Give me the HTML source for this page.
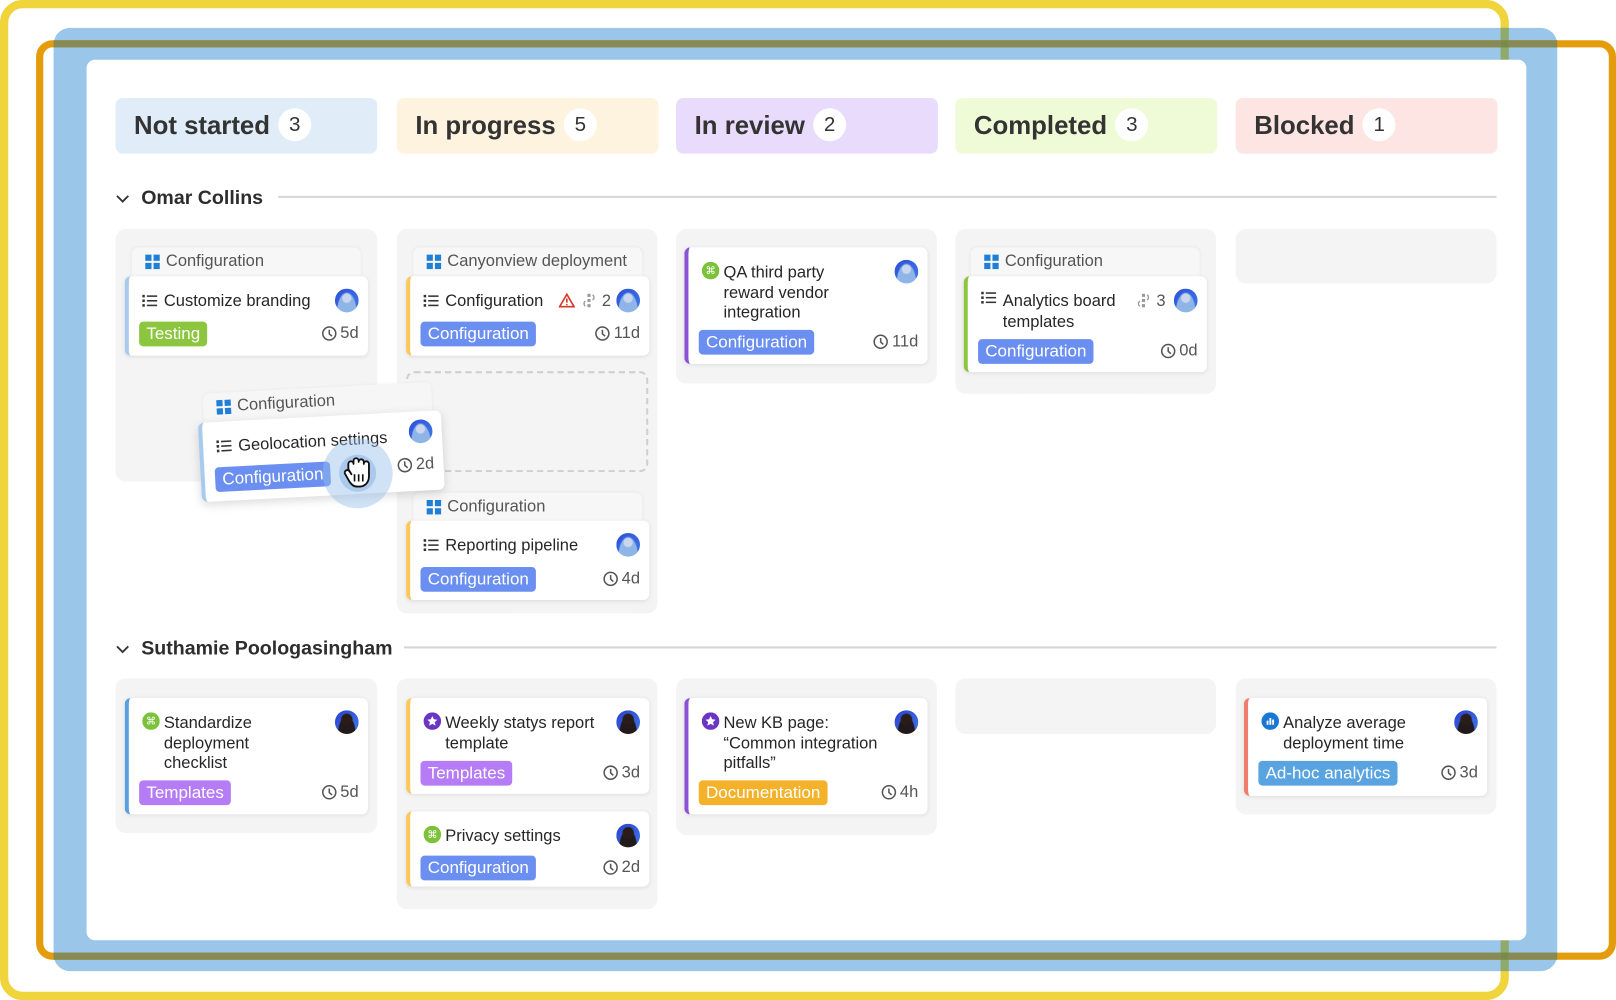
<!DOCTYPE html>
<html><head><meta charset="utf-8"><style>
*{box-sizing:border-box;margin:0;padding:0}
html,body{width:1616px;height:1000px;overflow:hidden;background:#fff}
#s{position:absolute;left:0;top:0;width:1568px;height:970px;transform-origin:0 0;transform:scale(1.030612,1.030928);font-family:"Liberation Sans",sans-serif;color:#2a2a2a}
.a{position:absolute}
.hd{position:absolute;top:95px;height:54px;width:254px;border-radius:7px;font-size:25px;font-weight:bold;color:#333;padding-left:18px;line-height:55px}
.hd span{display:inline-block;width:32px;height:32px;border-radius:50%;background:#fff;text-align:center;line-height:32px;font-weight:normal;font-size:20px;margin-left:8px;vertical-align:3px}
.lane{position:absolute;background:#f4f4f4;border-radius:10px}
.tab{position:absolute;height:29px;width:222px;background:#f7f7f7;border-radius:6px 6px 0 0;box-shadow:0 0 3px rgba(0,0,0,.06);font-size:16px;color:#555;line-height:27px;padding-left:33px}
.tab i{position:absolute;left:13px;top:7px;width:14px;height:14px;background:
linear-gradient(#1f7fd6,#1f7fd6) 0 0/6px 6px no-repeat,linear-gradient(#1f7fd6,#1f7fd6) 8px 0/6px 6px no-repeat,linear-gradient(#1f7fd6,#1f7fd6) 0 8px/6px 6px no-repeat,linear-gradient(#1f7fd6,#1f7fd6) 8px 8px/6px 6px no-repeat}
.card{position:absolute;width:236px;background:#fff;border-radius:6px;box-shadow:0 1px 4px rgba(0,0,0,.09);border-left:4px solid var(--c)}
.t{position:absolute;left:34px;top:15px;font-size:16px;line-height:19.5px;color:#262626;width:160px}
.ic{position:absolute;left:13px;top:16px}
.av{position:absolute;right:9px;top:12px;width:23px;height:23px;border-radius:50%;background:radial-gradient(circle at 50% 40%,#c9d6ee 0 4px,transparent 5px),radial-gradient(ellipse at 50% 100%,#8fb4e8 0 9px,transparent 10px),linear-gradient(135deg,#2f4fd8,#3f7ae8);}
.av.w{background:radial-gradient(circle at 50% 38%,#2a1c18 0 5px,transparent 6px),radial-gradient(ellipse at 50% 100%,#221a1a 0 8px,transparent 9px),linear-gradient(135deg,#2a3fd0,#3f7ae8)}
.tag{position:absolute;left:10px;height:24px;border-radius:4px;color:#fff;font-size:16.5px;line-height:24px;padding:0 7px;margin-top:2px}
.tm{position:absolute;right:9px;font-size:16px;color:#555;line-height:24px;margin-top:2px}
.tm svg{vertical-align:-3px;margin-right:3px}
.cf{background:#6b8ef1}
.sec{position:absolute;font-size:19px;font-weight:bold;color:#2d2d2d}
</style></head><body><div id="s">
<div class="a" style="left:0;top:0;width:1464px;height:970px;border:8px solid #f0d43b;border-radius:22px"></div>
<div class="a" style="left:52px;top:27px;width:1459px;height:915px;background:#99c6e9;border-radius:16px"></div>
<div class="a" style="left:35px;top:39px;width:1533px;height:892px;border:7px solid #e59c0a;border-radius:16px"></div>
<div class="a" style="left:52px;top:39px;width:1459px;height:7px;background:#878a55"></div>
<div class="a" style="left:52px;top:924px;width:1459px;height:7px;background:#878a55"></div>
<div class="a" style="left:1456px;top:27px;width:8px;height:915px;background:#8faa6a"></div>
<div class="a" style="left:1456px;top:39px;width:8px;height:7px;background:#7a8a4a"></div>
<div class="a" style="left:1456px;top:924px;width:8px;height:7px;background:#7a8a4a"></div>
<div class="a" style="left:84px;top:58px;width:1397px;height:854px;background:#fff;border-radius:8px"></div>

<div class="hd" style="left:112px;background:#e0edf9">Not started<span>3</span></div>
<div class="hd" style="left:385px;background:#fdf3df">In progress<span>5</span></div>
<div class="hd" style="left:656px;background:#e9dbfc">In review<span>2</span></div>
<div class="hd" style="left:927px;background:#effbd6">Completed<span>3</span></div>
<div class="hd" style="left:1199px;background:#fde5e4">Blocked<span>1</span></div>

<svg class="a" style="left:112px;top:188px" width="14" height="10"><path d="M1.5 2l5.5 5.5 5.5-5.5" stroke="#333" stroke-width="1.8" fill="none"/></svg>
<div class="sec" style="left:137px;top:182px">Omar Collins</div>
<div class="a" style="left:270px;top:190px;width:1182px;height:2px;background:#d6d6d6"></div>

<div class="lane" style="left:112px;top:222px;width:254px;height:245px"></div>
<div class="lane" style="left:385px;top:222px;width:253px;height:373px"></div>
<div class="lane" style="left:656px;top:222px;width:253px;height:150px"></div>
<div class="lane" style="left:927px;top:222px;width:253px;height:160px"></div>
<div class="lane" style="left:1199px;top:222px;width:253px;height:53px"></div>

<div class="tab" style="left:128px;top:240px"><i></i>Configuration</div>
<div class="card" style="left:121px;top:268px;height:77px;--c:#a8caef">
<svg class="ic" width="15" height="13" style="top:17px"><g fill="#333"><rect x="0" y="1" width="2.5" height="2.5"/><rect x="0" y="5.5" width="2.5" height="2.5"/><rect x="0" y="10" width="2.5" height="2.5"/><rect x="4.5" y="1.5" width="10" height="1.5"/><rect x="4.5" y="6" width="10" height="1.5"/><rect x="4.5" y="10.5" width="10" height="1.5"/></g></svg>
<div class="t">Customize branding</div><div class="av"></div>
<div class="tag" style="top:42px;background:#8cc63f">Testing</div>
<div class="tm" style="top:42px"><svg width="15" height="15"><circle cx="7.5" cy="7.5" r="6.3" stroke="#555" stroke-width="1.5" fill="none"/><path d="M7.5 3.8v4l2.6 2.3" stroke="#555" stroke-width="1.5" fill="none"/></svg>5d</div>
</div>

<div class="tab" style="left:401px;top:240px"><i></i>Canyonview deployment</div>
<div class="card" style="left:394px;top:268px;height:77px;--c:#fbc85a">
<svg class="ic" width="15" height="13" style="top:17px"><g fill="#333"><rect x="0" y="1" width="2.5" height="2.5"/><rect x="0" y="5.5" width="2.5" height="2.5"/><rect x="0" y="10" width="2.5" height="2.5"/><rect x="4.5" y="1.5" width="10" height="1.5"/><rect x="4.5" y="6" width="10" height="1.5"/><rect x="4.5" y="10.5" width="10" height="1.5"/></g></svg>
<div class="t">Configuration</div>
<svg class="a" style="left:144px;top:16px" width="16" height="15"><path d="M8 1.5L15 13.5H1Z" stroke="#d23b2b" stroke-width="1.6" fill="none"/><path d="M8 5.5v4M8 11v1.2" stroke="#d23b2b" stroke-width="1.6"/></svg>
<svg class="a" style="left:165px;top:16px" width="18" height="15"><g fill="#999"><rect x="7" y="1" width="3" height="3"/><rect x="7" y="6" width="3" height="3"/><rect x="7" y="11" width="3" height="3"/></g><path d="M5 8a3 3 0 0 0 0 5M12 2a3 3 0 0 1 0 5" stroke="#999" stroke-width="1.3" fill="none"/></svg>
<div class="a" style="left:186px;top:15px;font-size:16px;color:#555;line-height:19px">2</div>
<div class="av"></div>
<div class="tag cf" style="top:42px">Configuration</div>
<div class="tm" style="top:42px"><svg width="15" height="15"><circle cx="7.5" cy="7.5" r="6.3" stroke="#555" stroke-width="1.5" fill="none"/><path d="M7.5 3.8v4l2.6 2.3" stroke="#555" stroke-width="1.5" fill="none"/></svg>11d</div>
</div>
<div class="a" style="left:394px;top:360px;width:235px;height:98px;border:2px dashed #cfcfcf;border-radius:8px"></div>
<div class="tab" style="left:401px;top:478px"><i></i>Configuration</div>
<div class="card" style="left:394px;top:505px;height:77px;--c:#fbc85a">
<svg class="ic" width="15" height="13" style="top:17px"><g fill="#333"><rect x="0" y="1" width="2.5" height="2.5"/><rect x="0" y="5.5" width="2.5" height="2.5"/><rect x="0" y="10" width="2.5" height="2.5"/><rect x="4.5" y="1.5" width="10" height="1.5"/><rect x="4.5" y="6" width="10" height="1.5"/><rect x="4.5" y="10.5" width="10" height="1.5"/></g></svg>
<div class="t">Reporting pipeline</div><div class="av"></div>
<div class="tag cf" style="top:43px">Configuration</div>
<div class="tm" style="top:43px"><svg width="15" height="15"><circle cx="7.5" cy="7.5" r="6.3" stroke="#555" stroke-width="1.5" fill="none"/><path d="M7.5 3.8v4l2.6 2.3" stroke="#555" stroke-width="1.5" fill="none"/></svg>4d</div>
</div>

<div class="card" style="left:664px;top:240px;height:113px;--c:#8c52d6">
<svg class="ic" width="17" height="17" style="top:14px"><circle cx="8.5" cy="8.5" r="8.5" fill="#7cc13a"/><text x="8.5" y="12" font-size="10" fill="#fff" text-anchor="middle" font-family="DejaVu Sans">⌘</text></svg>
<div class="t">QA third party<br>reward vendor<br>integration</div><div class="av"></div>
<div class="tag cf" style="top:78px">Configuration</div>
<div class="tm" style="top:78px"><svg width="15" height="15"><circle cx="7.5" cy="7.5" r="6.3" stroke="#555" stroke-width="1.5" fill="none"/><path d="M7.5 3.8v4l2.6 2.3" stroke="#555" stroke-width="1.5" fill="none"/></svg>11d</div>
</div>

<div class="tab" style="left:942px;top:240px"><i></i>Configuration</div>
<div class="card" style="left:935px;top:268px;height:93px;--c:#8dc63f">
<svg class="ic" width="15" height="13" style="top:14px"><g fill="#333"><rect x="0" y="1" width="2.5" height="2.5"/><rect x="0" y="5.5" width="2.5" height="2.5"/><rect x="0" y="10" width="2.5" height="2.5"/><rect x="4.5" y="1.5" width="10" height="1.5"/><rect x="4.5" y="6" width="10" height="1.5"/><rect x="4.5" y="10.5" width="10" height="1.5"/></g></svg>
<div class="t">Analytics board<br>templates</div>
<svg class="a" style="left:162px;top:16px" width="18" height="15"><g fill="#999"><rect x="7" y="1" width="3" height="3"/><rect x="7" y="6" width="3" height="3"/><rect x="7" y="11" width="3" height="3"/></g><path d="M5 8a3 3 0 0 0 0 5M12 2a3 3 0 0 1 0 5" stroke="#999" stroke-width="1.3" fill="none"/></svg>
<div class="a" style="left:183px;top:15px;font-size:16px;color:#555;line-height:19px">3</div>
<div class="av"></div>
<div class="tag cf" style="top:59px">Configuration</div>
<div class="tm" style="top:59px"><svg width="15" height="15"><circle cx="7.5" cy="7.5" r="6.3" stroke="#555" stroke-width="1.5" fill="none"/><path d="M7.5 3.8v4l2.6 2.3" stroke="#555" stroke-width="1.5" fill="none"/></svg>0d</div>
</div>

<div class="a" style="left:193px;top:373px;width:236px;height:110px;transform:rotate(-3deg);transform-origin:50% 50%">
<div class="tab" style="left:6px;top:3px;background:#f6f6f6"><i></i>Configuration</div>
<div class="card" style="left:0;top:31px;height:77px;--c:#a8caef;box-shadow:0 3px 10px rgba(0,0,0,.15)">
<svg class="ic" width="15" height="13" style="top:17px"><g fill="#333"><rect x="0" y="1" width="2.5" height="2.5"/><rect x="0" y="5.5" width="2.5" height="2.5"/><rect x="0" y="10" width="2.5" height="2.5"/><rect x="4.5" y="1.5" width="10" height="1.5"/><rect x="4.5" y="6" width="10" height="1.5"/><rect x="4.5" y="10.5" width="10" height="1.5"/></g></svg>
<div class="t">Geolocation settings</div><div class="av" style="top:8px"></div>
<div class="tag cf" style="top:42px">Configuration</div>
<div class="tm" style="top:38px"><svg width="15" height="15"><circle cx="7.5" cy="7.5" r="6.3" stroke="#555" stroke-width="1.5" fill="none"/><path d="M7.5 3.8v4l2.6 2.3" stroke="#555" stroke-width="1.5" fill="none"/></svg>2d</div>
</div></div>
<div class="a" style="left:313px;top:425px;width:68px;height:68px;border-radius:50%;background:rgba(150,190,236,.45)"></div>
<div class="a" style="left:329px;top:441px;width:36px;height:36px;border-radius:50%;background:rgba(140,180,230,.55)"></div>
<svg class="a" style="left:332px;top:441px" width="32" height="36"><path d="M6 14V9a2.5 2.5 0 0 1 5 0V6a2.5 2.5 0 0 1 5 0v1a2.5 2.5 0 0 1 5 0v2a2.5 2.5 0 0 1 5 0v12c0 6-4 10-9 10h-2c-4 0-6-2-8-5l-4-7a2.5 2.5 0 0 1 4-3l2 3z" fill="#fff" stroke="#111" stroke-width="1.8" stroke-linejoin="round"/><path d="M12 19v7M16 19v7M20 19v7" stroke="#111" stroke-width="1.6"/></svg>

<svg class="a" style="left:112px;top:625px" width="14" height="10"><path d="M1.5 2l5.5 5.5 5.5-5.5" stroke="#333" stroke-width="1.8" fill="none"/></svg>
<div class="sec" style="left:137px;top:619px">Suthamie Poologasingham</div>
<div class="a" style="left:392px;top:627px;width:1060px;height:2px;background:#d6d6d6"></div>

<div class="lane" style="left:112px;top:658px;width:254px;height:150px"></div>
<div class="lane" style="left:385px;top:658px;width:253px;height:224px"></div>
<div class="lane" style="left:656px;top:658px;width:253px;height:152px"></div>
<div class="lane" style="left:927px;top:658px;width:253px;height:54px"></div>
<div class="lane" style="left:1199px;top:658px;width:253px;height:132px"></div>

<div class="card" style="left:121px;top:677px;height:113px;--c:#5a9fe0">
<svg class="ic" width="17" height="17" style="top:14px"><circle cx="8.5" cy="8.5" r="8.5" fill="#7cc13a"/><text x="8.5" y="12" font-size="10" fill="#fff" text-anchor="middle" font-family="DejaVu Sans">⌘</text></svg>
<div class="t">Standardize<br>deployment<br>checklist</div><div class="av w"></div>
<div class="tag" style="top:78px;background:#b57cf5">Templates</div>
<div class="tm" style="top:78px"><svg width="15" height="15"><circle cx="7.5" cy="7.5" r="6.3" stroke="#555" stroke-width="1.5" fill="none"/><path d="M7.5 3.8v4l2.6 2.3" stroke="#555" stroke-width="1.5" fill="none"/></svg>5d</div>
</div>

<div class="card" style="left:394px;top:677px;height:93px;--c:#fbc85a">
<svg class="ic" width="17" height="17" style="top:14px"><circle cx="8.5" cy="8.5" r="8.5" fill="#6a35c4"/><path d="M8.5 3.5l1.5 3.2 3.4.4-2.5 2.3.7 3.4-3.1-1.7-3.1 1.7.7-3.4-2.5-2.3 3.4-.4z" fill="#fff"/></svg>
<div class="t" style="width:170px">Weekly statys report<br>template</div><div class="av w"></div>
<div class="tag" style="top:59px;background:#b57cf5">Templates</div>
<div class="tm" style="top:59px"><svg width="15" height="15"><circle cx="7.5" cy="7.5" r="6.3" stroke="#555" stroke-width="1.5" fill="none"/><path d="M7.5 3.8v4l2.6 2.3" stroke="#555" stroke-width="1.5" fill="none"/></svg>3d</div>
</div>
<div class="card" style="left:394px;top:787px;height:73px;--c:#fbc85a">
<svg class="ic" width="17" height="17" style="top:14px"><circle cx="8.5" cy="8.5" r="8.5" fill="#7cc13a"/><text x="8.5" y="12" font-size="10" fill="#fff" text-anchor="middle" font-family="DejaVu Sans">⌘</text></svg>
<div class="t">Privacy settings</div><div class="av w"></div>
<div class="tag cf" style="top:41px">Configuration</div>
<div class="tm" style="top:41px"><svg width="15" height="15"><circle cx="7.5" cy="7.5" r="6.3" stroke="#555" stroke-width="1.5" fill="none"/><path d="M7.5 3.8v4l2.6 2.3" stroke="#555" stroke-width="1.5" fill="none"/></svg>2d</div>
</div>

<div class="card" style="left:664px;top:677px;height:113px;--c:#8c52d6">
<svg class="ic" width="17" height="17" style="top:14px"><circle cx="8.5" cy="8.5" r="8.5" fill="#6a35c4"/><path d="M8.5 3.5l1.5 3.2 3.4.4-2.5 2.3.7 3.4-3.1-1.7-3.1 1.7.7-3.4-2.5-2.3 3.4-.4z" fill="#fff"/></svg>
<div class="t" style="width:170px">New KB page:<br>“Common integration<br>pitfalls”</div><div class="av w"></div>
<div class="tag" style="top:78px;background:#f4b12a">Documentation</div>
<div class="tm" style="top:78px"><svg width="15" height="15"><circle cx="7.5" cy="7.5" r="6.3" stroke="#555" stroke-width="1.5" fill="none"/><path d="M7.5 3.8v4l2.6 2.3" stroke="#555" stroke-width="1.5" fill="none"/></svg>4h</div>
</div>

<div class="card" style="left:1207px;top:677px;height:95px;--c:#f07c6b">
<svg class="ic" width="17" height="17" style="top:14px"><circle cx="8.5" cy="8.5" r="8.5" fill="#1a78d4"/><rect x="5" y="8" width="1.8" height="4" fill="#fff"/><rect x="7.7" y="5.5" width="1.8" height="6.5" fill="#fff"/><rect x="10.4" y="7" width="1.8" height="5" fill="#fff"/></svg>
<div class="t">Analyze average<br>deployment time</div><div class="av w"></div>
<div class="tag" style="top:59px;background:#58a3e0">Ad-hoc analytics</div>
<div class="tm" style="top:59px"><svg width="15" height="15"><circle cx="7.5" cy="7.5" r="6.3" stroke="#555" stroke-width="1.5" fill="none"/><path d="M7.5 3.8v4l2.6 2.3" stroke="#555" stroke-width="1.5" fill="none"/></svg>3d</div>
</div>
</div></body></html>
